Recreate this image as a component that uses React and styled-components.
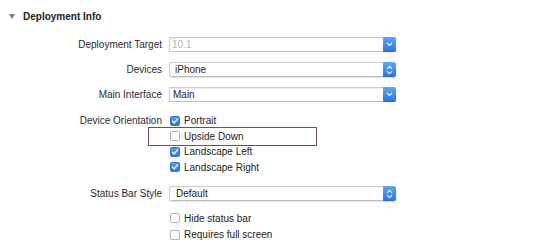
import React from "react";
import styled, { createGlobalStyle } from "styled-components";

const GlobalStyle = createGlobalStyle`
  body {
    margin: 0;
    background: #ffffff;
    font-family: "Liberation Sans", Arial, sans-serif;
    font-size: 10px;
    color: #262626;
  }
`;

const Page = styled.div`
  width: 540px;
  height: 250px;
  overflow: hidden;
  background: #ffffff;
`;

const Header = styled.div`
  height: 32px;
  display: flex;
  align-items: center;
  padding-left: 9px;
  gap: 8px;
`;

const Disclosure = styled.span`
  width: 0;
  height: 0;
  border-left: 3px solid transparent;
  border-right: 3px solid transparent;
  border-top: 5px solid #7a7a7a;
  margin-top: 1px;
`;

const Title = styled.div`
  font-weight: bold;
  font-size: 10px;
  color: #222222;
`;

const Row = styled.div`
  display: flex;
  align-items: center;
  height: ${(p) => p.$h || 15}px;
  margin-top: ${(p) => p.$mt || 0}px;
`;

const Label = styled.div`
  width: 169px;
  box-sizing: border-box;
  padding-right: 7px;
  text-align: right;
  color: #2a2a2a;
  white-space: nowrap;
`;

const Field = styled.div`
  position: relative;
  width: 227px;
  height: 15px;
  box-sizing: border-box;
  display: flex;
  align-items: center;
  background: #ffffff;
  border: 1px solid #cdcdcd;
  border-bottom-color: #bdbdbd;
  border-radius: ${(p) => (p.$popup ? "3px" : "0")};
  border-right: none;
  box-shadow: ${(p) => (p.$popup ? "0 0.5px 1px rgba(0,0,0,0.12)" : "inset 0 1px 0 #ececec")};
`;

const FieldText = styled.span`
  flex: 1;
  padding-left: ${(p) => p.$pad}px;
  color: ${(p) => (p.$disabled ? "#b4b4b4" : "#1e1e1e")};
  white-space: nowrap;
`;

const Arrow = styled.div`
  width: 13px;
  height: 15px;
  margin-top: -1px;
  margin-bottom: -1px;
  display: flex;
  align-items: center;
  justify-content: center;
  background: linear-gradient(#5aa7fb, #2574ea);
  border-radius: 0 3px 3px 0;
  box-shadow: inset 0 -0.5px 0 #1a5fd0;
`;

const Group = styled.div`
  margin-top: ${(p) => p.$mt || 0}px;
`;

const CheckRow = styled.div`
  position: relative;
  display: flex;
  align-items: center;
  height: ${(p) => p.$h || 15.5}px;
  margin-top: ${(p) => p.$mt || 0}px;
  margin-left: ${(p) => (p.$indent ? 169 : 0)}px;
`;

const CheckItem = styled.div`
  position: relative;
  display: flex;
  align-items: center;
  gap: 4px;
  padding-left: 1px;
  height: 100%;
  color: #222222;
`;

const Highlight = styled.div`
  position: absolute;
  left: -21px;
  top: -9.5px;
  width: 169px;
  height: 19px;
  box-sizing: border-box;
  border: 1.5px solid #5b4e92;
  pointer-events: none;
`;

const Box = styled.span`
  width: 10px;
  height: 10px;
  box-sizing: border-box;
  border-radius: 2px;
  display: flex;
  align-items: center;
  justify-content: center;
  background: ${(p) => (p.$on ? "linear-gradient(#4f9ffa, #2a78ee)" : "#ffffff")};
  border: 1px solid ${(p) => (p.$on ? "#2b72de" : "#b3b3b3")};
`;

const Mid = styled.div`
  position: absolute;
  left: 0;
  top: 50%;
`;

function Chevron({ double }) {
  if (double) {
    return (
      <svg width="7" height="10" viewBox="0 0 7 10">
        <path d="M1.2 3.6 L3.5 1.3 L5.8 3.6" stroke="#fff" strokeWidth="1.1" fill="none" strokeLinecap="round" strokeLinejoin="round" />
        <path d="M1.2 6.4 L3.5 8.7 L5.8 6.4" stroke="#fff" strokeWidth="1.1" fill="none" strokeLinecap="round" strokeLinejoin="round" />
      </svg>
    );
  }
  return (
    <svg width="7" height="5" viewBox="0 0 7 5">
      <path d="M1.2 1.2 L3.5 3.5 L5.8 1.2" stroke="#fff" strokeWidth="1.1" fill="none" strokeLinecap="round" strokeLinejoin="round" />
    </svg>
  );
}

function Check({ on, children, highlight }) {
  return (
    <CheckItem>
      {highlight && (
        <Mid>
          <Highlight />
        </Mid>
      )}
      <Box $on={on}>
        {on && (
          <svg width="8" height="8" viewBox="0 0 8 8">
            <path d="M1.6 4.2 L3.3 5.9 L6.4 2" stroke="#fff" strokeWidth="1.4" fill="none" strokeLinecap="round" strokeLinejoin="round" />
          </svg>
        )}
      </Box>
      <span>{children}</span>
    </CheckItem>
  );
}

function Select({ value, popup, disabled, pad }) {
  return (
    <Field $popup={popup}>
      <FieldText $disabled={disabled} $pad={pad}>{value}</FieldText>
      <Arrow>
        <Chevron double={popup} />
      </Arrow>
    </Field>
  );
}

export default function App() {
  return (
    <Page>
      <GlobalStyle />
      <Header>
        <Disclosure />
        <Title>Deployment Info</Title>
      </Header>

      <Row $mt={5}>
        <Label>Deployment Target</Label>
        <Select value="10.1" disabled pad={2} />
      </Row>
      <Row $mt={10}>
        <Label>Devices</Label>
        <Select value="iPhone" popup pad={5} />
      </Row>
      <Row $mt={10}>
        <Label>Main Interface</Label>
        <Select value="Main" pad={3} />
      </Row>

      <Group $mt={11}>
        <CheckRow>
          <Label>Device Orientation</Label>
          <Check on>Portrait</Check>
        </CheckRow>
        <CheckRow $indent>
          <Check highlight>Upside Down</Check>
        </CheckRow>
        <CheckRow $indent>
          <Check on>Landscape Left</Check>
        </CheckRow>
        <CheckRow $indent>
          <Check on>Landscape Right</Check>
        </CheckRow>
      </Group>

      <Row $mt={11}>
        <Label>Status Bar Style</Label>
        <Select value="Default" popup pad={6} />
      </Row>

      <CheckRow $indent $mt={9.5}>
        <Check>Hide status bar</Check>
      </CheckRow>
      <CheckRow $indent $mt={1.2}>
        <Check>Requires full screen</Check>
      </CheckRow>
    </Page>
  );
}
